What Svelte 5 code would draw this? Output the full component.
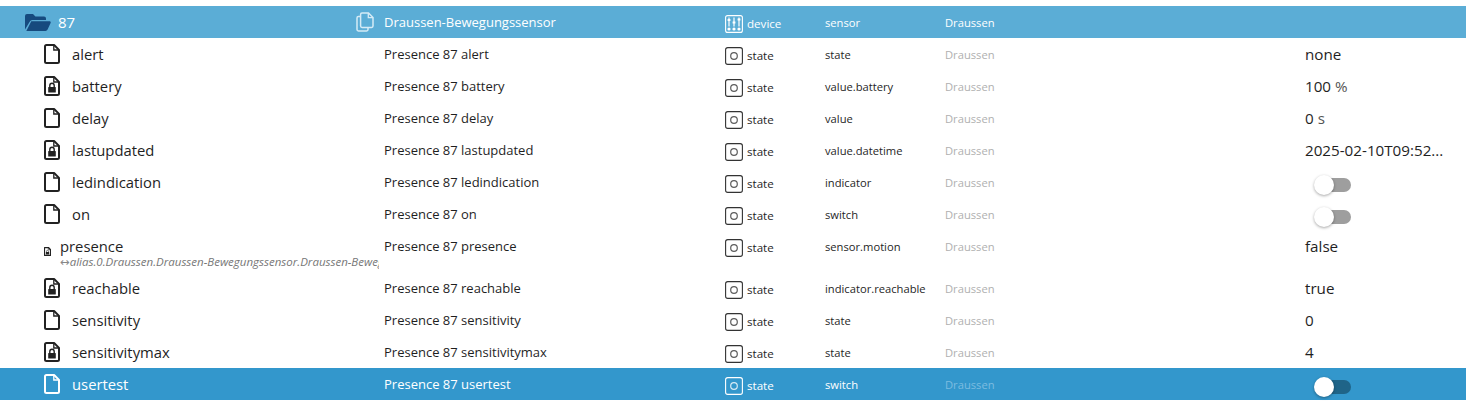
<script>
  // rows of the object browser, below the device row
  const rows = [
    { name: "alert", locked: false, role: "state", value: "none" },
    { name: "battery", locked: true, role: "value.battery", value: "100", unit: "%" },
    { name: "delay", locked: false, role: "value", value: "0", unit: "s" },
    { name: "lastupdated", locked: true, role: "value.datetime", value: "2025-02-10T09:52..." },
    { name: "ledindication", locked: false, role: "indicator", toggle: true },
    { name: "on", locked: false, role: "switch", toggle: true },
    {
      name: "presence",
      locked: true,
      small: true,
      alias: "alias.0.Draussen.Draussen-Bewegungssensor.Draussen-Bewegungssensor.presence",
      role: "sensor.motion",
      value: "false"
    },
    { name: "reachable", locked: true, role: "indicator.reachable", value: "true" },
    { name: "sensitivity", locked: false, role: "state", value: "0" },
    { name: "sensitivitymax", locked: true, role: "state", value: "4" },
    { name: "usertest", locked: false, role: "switch", toggle: true, selected: true }
  ];
</script>

{#snippet fileIcon(locked, small)}
  <svg class="file" class:small viewBox="0 0 16 20" width={small ? 7 : 16} height={small ? 9 : 20}>
    <path
      d="M2.500 1h7.600L15 5.900V17.500a1.500 1.500 0 0 1-1.500 1.500h-11A1.500 1.500 0 0 1 1 17.500V2.500A1.500 1.500 0 0 1 2.500 1z"
      fill="none"
      stroke="currentColor"
      stroke-width={small ? 3 : 2}
      stroke-linejoin="round"
    />
    <path d="M9.800 1v5H15" fill="none" stroke="currentColor" stroke-width="1.300" />
    {#if locked}
      <path d="M5.800 11V9.500a2.200 2.200 0 0 1 4.400 0V11" fill="none" stroke="currentColor" stroke-width="1.400" />
      <rect x="4.200" y="11" width="7.600" height="5.600" rx="0.600" fill="currentColor" />
    {/if}
  </svg>
{/snippet}

{#snippet stateIcon()}
  <svg class="type-icon" viewBox="0 0 18 18" width="18" height="18">
    <rect x="0.600" y="0.600" width="16.800" height="16.800" rx="2.200" fill="none" stroke="currentColor" stroke-width="1.100" />
    <circle cx="9" cy="9" r="3.300" fill="none" stroke="currentColor" stroke-width="1.200" opacity="0.8" />
  </svg>
{/snippet}

<div class="browser">
  <div class="row device">
    <div class="cell name">
      <svg class="folder" viewBox="0 0 26 17" width="26" height="17">
        <path d="M0 15.500V2a2 2 0 0 1 2-2h6l2.400 2.400H19a2 2 0 0 1 2 2V6H7.400a3 3 0 0 0-2.700 1.700z" fill="#164a7e" />
        <path d="M6.300 7.300h18.200c.9 0 1.500.9 1.100 1.700l-3 6.600a2.400 2.400 0 0 1-2.200 1.400H1.300z" fill="#164a7e" />
      </svg>
      <span class="device-id">87</span>
      <svg class="copy" viewBox="0 0 18 20" width="18" height="20">
        <path d="M6 1h6.500L17 5.500V14a1.400 1.400 0 0 1-1.400 1.400H6A1.400 1.400 0 0 1 4.600 14V2.400A1.400 1.400 0 0 1 6 1z" fill="none" stroke="currentColor" stroke-width="1.500" />
        <path d="M12.300 1v4.700H17" fill="none" stroke="currentColor" stroke-width="1.300" />
        <path d="M4.600 4.600H2.400A1.400 1.400 0 0 0 1 6v11.600A1.400 1.400 0 0 0 2.400 19h8.200a1.400 1.400 0 0 0 1.400-1.400v-2.200" fill="none" stroke="currentColor" stroke-width="1.500" />
      </svg>
    </div>
    <div class="cell desc">Draussen-Bewegungssensor</div>
    <div class="cell type">
      <svg class="type-icon" viewBox="0 0 18 18" width="18" height="18">
        <rect x="0.600" y="0.600" width="16.800" height="16.800" rx="2" fill="none" stroke="currentColor" stroke-width="1.100" />
        <path d="M4 2.500v9M9 2.500v9M14 2.500v9" stroke="currentColor" stroke-width="1.200" />
        <path d="M2.600 5h2.800M7.600 7.500h2.800M12.600 4.500h2.800" stroke="currentColor" stroke-width="1.800" />
        <circle cx="4" cy="14" r="1.600" fill="currentColor" />
        <circle cx="9" cy="14" r="1.600" fill="currentColor" />
        <circle cx="14" cy="14" r="1.600" fill="currentColor" />
      </svg>
      <span>device</span>
    </div>
    <div class="cell role">sensor</div>
    <div class="cell room">Draussen</div>
    <div class="cell value"></div>
  </div>

  {#each rows as row}
    <div class="row" class:selected={row.selected} class:tall={row.alias}>
      <div class="cell name" class:has-alias={row.alias}>
        {@render fileIcon(row.locked, row.small)}
        {#if row.alias}
          <div class="name-stack">
            <span class="state-name">{row.name}</span>
            <span class="alias"><span class="arrow">↔</span>{row.alias}</span>
          </div>
        {:else}
          <span class="state-name">{row.name}</span>
        {/if}
      </div>
      <div class="cell desc">Presence 87 {row.name}</div>
      <div class="cell type">
        {@render stateIcon()}
        <span>state</span>
      </div>
      <div class="cell role">{row.role}</div>
      <div class="cell room">Draussen</div>
      <div class="cell value">
        {#if row.toggle}
          <span class="switch"><span class="thumb"></span></span>
        {:else}
          {row.value}{#if row.unit}<span class="unit">&nbsp;{row.unit}</span>{/if}
        {/if}
      </div>
    </div>
  {/each}
</div>

<style>
  :global(body) {
    background: #fff;
  }

  .browser {
    padding-top: 6px;
    width: 1466px;
    height: 396px;
    overflow: hidden;
    font-family: "Open Sans", "Noto Sans", sans-serif;
    color: #1f1f1f;
  }

  /* every row uses the same columns */
  .row {
    display: grid;
    grid-template-columns: 384px 341px 100px 120px 360px 161px;
    height: 32px;
    align-items: center;
    font-size: 13px;
  }

  /* the row with the alias line under its name */
  .row.tall {
    height: 42px;
    align-items: start;
  }

  .row.tall .cell {
    height: 32px;
    box-sizing: border-box;
  }

  .device {
    background: #5badd6;
    color: #fff;
  }

  .selected {
    background: #3397cc;
    color: #fff;
  }

  .cell {
    display: flex;
    align-items: center;
    min-width: 0;
    white-space: nowrap;
  }

  .name {
    padding-left: 44px;
    height: 32px;
    font-size: 14.800px;
    overflow: hidden;
    margin-right: 5px;
  }

  .row.tall .name {
    height: 42px;
  }

  .device .name {
    padding-left: 25px;
    position: relative;
  }

  .folder {
    flex: none;
    margin-top: 1px;
  }

  .device-id {
    margin-left: 7px;
    font-size: 15px;
  }

  /* sits at the end of the name column */
  .copy {
    position: absolute;
    left: 356px;
    top: 6px;
    color: #d5ebf6;
  }

  .file {
    flex: none;
    margin-right: 12px;
    color: #222;
  }

  .selected .file {
    color: #fff;
  }

  .has-alias {
    align-items: flex-start;
  }

  .has-alias .file.small {
    margin: 17px 9px 0 0;
  }

  .name-stack {
    display: flex;
    flex-direction: column;
    min-width: 0;
  }

  .name-stack .state-name {
    line-height: 20px;
    margin-top: 6px;
  }

  .alias {
    font-size: 11.500px;
    font-style: italic;
    line-height: 12px;
    color: #777;
  }

  .arrow {
    font-family: "DejaVu Sans", sans-serif;
    font-style: normal;
    font-size: 11.500px;
    color: #888;
  }

  .type {
    gap: 4px;
    font-size: 11.600px;
    padding-top: 2px;
  }

  .type-icon {
    flex: none;
    margin-top: 1px;
    color: #333;
  }

  .device .type-icon,
  .selected .type-icon {
    color: #fff;
  }

  .role {
    font-size: 11.200px;
    padding-top: 1px;
  }

  .room {
    color: #b0b0b0;
    font-size: 11.200px;
    padding-top: 1px;
  }

  .device .room {
    color: #fff;
  }

  .selected .room {
    color: #7cbce0;
  }

  .value {
    font-size: 15.200px;
  }

  .unit {
    color: #555;
  }

  .switch {
    position: relative;
    display: block;
    width: 34px;
    height: 14px;
    margin: 6px 0 0 12px;
    border-radius: 7px;
    background: #9e9e9e;
  }

  .selected .switch {
    background: #1f6488;
  }

  .thumb {
    position: absolute;
    left: -3px;
    top: -3px;
    width: 20px;
    height: 20px;
    border-radius: 50%;
    background: #fff;
    box-shadow: 0 1px 3px rgba(0, 0, 0, 0.35);
  }
</style>
